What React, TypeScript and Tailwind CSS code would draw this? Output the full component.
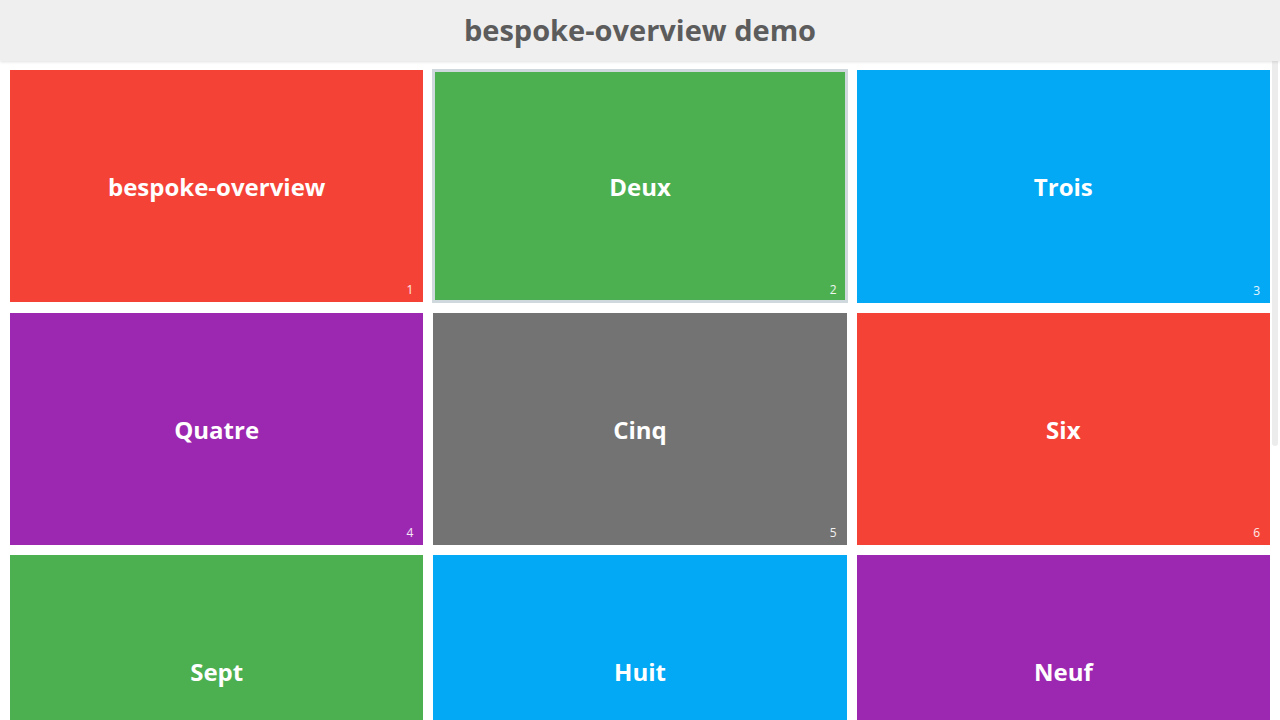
import React from "react";

const slides = [
  { title: "bespoke-overview", color: "bg-[#f44336]" },
  { title: "Deux", color: "bg-[#4caf50]", active: true },
  { title: "Trois", color: "bg-[#03a9f4]" },
  { title: "Quatre", color: "bg-[#9c27b0]" },
  { title: "Cinq", color: "bg-[#737373]" },
  { title: "Six", color: "bg-[#f44336]" },
  { title: "Sept", color: "bg-[#4caf50]" },
  { title: "Huit", color: "bg-[#03a9f4]" },
  { title: "Neuf", color: "bg-[#9c27b0]" },
];

export default function App() {
  return (
    <div className="relative h-screen w-full overflow-hidden bg-white" style={{ fontFamily: '"Open Sans", "Noto Sans", sans-serif' }}>
      <header className="relative z-10 flex h-[61px] items-center justify-center bg-[#efefef] shadow-[0_1px_3px_rgba(0,0,0,0.12)]">
        <h1 className="pb-[2px] text-[29px] font-bold leading-none text-[#5c5c5c]">bespoke-overview demo</h1>
      </header>
      <main className="grid grid-cols-3 gap-[10px] p-[10px] pt-[9px]">
        {slides.map((s, i) => (
          <div
            key={i}
            className={`relative flex aspect-[16/9] items-center justify-center ${s.color} ${
              s.active ? "shadow-[0_0_0_1px_#cfd8dc,inset_0_0_0_2px_#cfd8dc]" : ""
            }`}
          >
            <span className="pt-[2px] text-[24px] font-bold leading-none text-white">{s.title}</span>
            <span className="absolute bottom-[6px] right-[10px] text-[12px] leading-none text-white/90">{i + 1}</span>
          </div>
        ))}
      </main>
      <div className="absolute right-[2px] top-[3px] h-[443px] w-[6px] rounded-full bg-[#d9d9d9]/50" />
    </div>
  );
}
